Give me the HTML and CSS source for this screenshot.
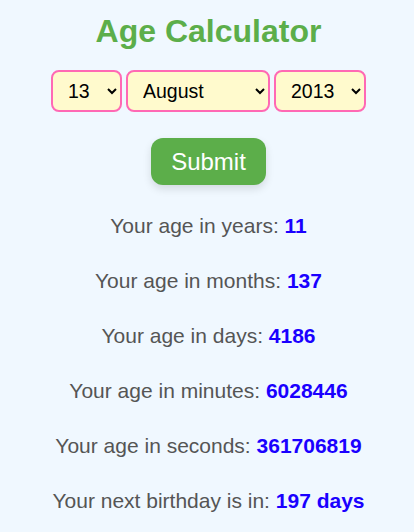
FILE: index.html
```html
<!DOCTYPE html>
<html lang="en">
<head>
<meta charset="utf-8">
<title>Age Calculator</title>
<link rel="stylesheet" href="styles.css">
</head>
<body>
<main class="app">
  <h1 class="title">Age Calculator</h1>
  <form class="picker">
    <select class="sel sel-day">
      <option>1</option><option>2</option><option>3</option><option>4</option><option>5</option>
      <option>6</option><option>7</option><option>8</option><option>9</option><option>10</option>
      <option>11</option><option>12</option><option selected>13</option><option>14</option><option>15</option>
      <option>16</option><option>17</option><option>18</option><option>19</option><option>20</option>
      <option>21</option><option>22</option><option>23</option><option>24</option><option>25</option>
      <option>26</option><option>27</option><option>28</option><option>29</option><option>30</option><option>31</option>
    </select>
    <select class="sel sel-month">
      <option>January</option><option>February</option><option>March</option><option>April</option>
      <option>May</option><option>June</option><option>July</option><option selected>August</option>
      <option>September</option><option>October</option><option>November</option><option>December</option>
    </select>
    <select class="sel sel-year">
      <option>2010</option><option>2011</option><option>2012</option><option selected>2013</option><option>2014</option>
    </select>
  </form>
  <button class="submit" type="button">Submit</button>
  <section class="results">
    <p class="line">Your age in years: <b class="num">11</b></p>
    <p class="line">Your age in months: <b class="num">137</b></p>
    <p class="line">Your age in days: <b class="num">4186</b></p>
    <p class="line">Your age in minutes: <b class="num">6028446</b></p>
    <p class="line">Your age in seconds: <b class="num">361706819</b></p>
    <p class="line">Your next birthday is in: <b class="num">197 days</b></p>
  </section>
</main>
</body>
</html>
```

FILE: styles.css
```css
html, body {
  margin: 0;
  background: #f0f8ff;
}

body {
  font-family: "Liberation Sans", Arial, sans-serif;
  padding-left: 3px;
}

.app {
  display: flex;
  flex-direction: column;
  align-items: center;
  text-align: center;
}

.title {
  margin: 0;
  padding-top: 13px;
  font-size: 32px;
  line-height: 36px;
  font-weight: bold;
  color: #5cae4a;
}

.picker {
  margin: 21px 0 0;
  display: flex;
  justify-content: center;
  gap: 4px;
}

.sel {
  box-sizing: border-box;
  height: 42px;
  padding: 0 2px 0 11px;
  border: 2px solid #ff69b4;
  border-radius: 8px;
  background: #fffacd;
  color: #000;
  font-family: "Liberation Sans", Arial, sans-serif;
  font-size: 19.5px;
}

.sel-day { width: 71px; }
.sel-month { width: 144px; }
.sel-year { width: 92px; }

.submit {
  margin-top: 26px;
  padding: 10px 20px;
  border: none;
  border-radius: 12px;
  background: #5cae4a;
  color: #fff;
  font-family: "Liberation Sans", Arial, sans-serif;
  font-size: 24px;
  line-height: 27px;
  box-shadow: 0 4px 8px rgba(0, 0, 0, 0.12);
}

.results {
  margin-top: 29px;
  display: flex;
  flex-direction: column;
  gap: 31px;
}

.line {
  margin: 0;
  font-size: 21px;
  line-height: 24px;
  color: #555;
}

.num {
  color: #1a00ff;
  font-weight: bold;
}
```
